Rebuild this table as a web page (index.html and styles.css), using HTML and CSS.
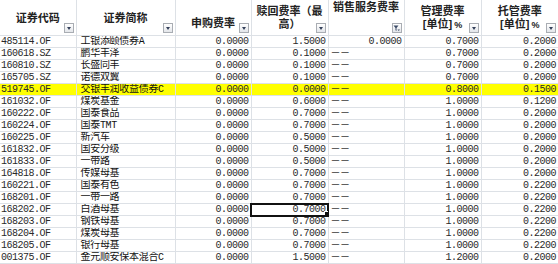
FILE: index.html
```html
<!DOCTYPE html>
<html lang="zh-CN">
<head>
    <meta charset="UTF-8">
    <title>基金费率</title>
    <link rel="stylesheet" href="styles.css">
</head>
<body>

    <table class="sheet">
        <colgroup>
            <col class="c-code">
            <col class="c-name">
            <col class="c-num">
            <col class="c-num2">
            <col class="c-num">
            <col class="c-num2">
            <col class="c-num2">
        </colgroup>
        <thead>
            <tr>
                <th>证券代码<span class="dd"></span></th>
                <th>证券简称<span class="dd"></span></th>
                <th class="low">申购费率<span class="dd"></span></th>
                <th>赎回费率（最<br>高）<span class="dd"></span></th>
                <th class="top">销售服务费率<span class="dd filter">
                    <svg width="7" height="7" viewBox="0 0 7 7"><path d="M0.5 0.5h5l-2 2.5v3l-1-0.8v-2.2z" fill="#3b4a66"/><path d="M4.5 4.5h2.5l-1.25 1.5z" fill="#3b4a66"/></svg>
                </span></th>
                <th>管理费率<br><span class="unit">[单位]</span><small>%</small><span class="dd"></span></th>
                <th>托管费率<br><span class="unit">[单位]</span><small>%</small><span class="dd"></span></th>
            </tr>
        </thead>
        <tbody id="rows"></tbody>
    </table>

    <script>
        // code, name, 申购, 赎回, 销售服务, 管理, 托管
        const data = [
            ['485114.OF', '工银添颐债券A', '0.0000', '1.5000', '0.0000', '0.7000', '0.2000'],
            ['160618.SZ', '鹏华丰泽', '0.0000', '0.1000', '－－', '0.7000', '0.2000'],
            ['160810.SZ', '长盛同丰', '0.0000', '0.1000', '－－', '0.7000', '0.2000'],
            ['165705.SZ', '诺德双翼', '0.0000', '0.1000', '－－', '0.7000', '0.2000'],
            ['519745.OF', '交银丰润收益债券C', '0.0000', '0.0000', '－－', '0.8000', '0.1500'],
            ['161032.OF', '煤炭基金', '0.0000', '0.6000', '－－', '1.0000', '0.1200'],
            ['160222.OF', '国泰食品', '0.0000', '0.7000', '－－', '1.0000', '0.2000'],
            ['160224.OF', '国泰TMT', '0.0000', '0.7000', '－－', '1.0000', '0.2000'],
            ['160225.OF', '新汽车', '0.0000', '0.5000', '－－', '1.0000', '0.2000'],
            ['161832.OF', '国安分级', '0.0000', '0.5000', '－－', '1.0000', '0.2000'],
            ['161833.OF', '一带路', '0.0000', '0.5000', '－－', '1.0000', '0.2000'],
            ['164818.OF', '传媒母基', '0.0000', '0.7000', '－－', '1.0000', '0.2000'],
            ['160221.OF', '国泰有色', '0.0000', '0.7000', '－－', '1.0000', '0.2200'],
            ['168201.OF', '一带一路', '0.0000', '0.7000', '－－', '1.0000', '0.2200'],
            ['168202.OF', '白酒母基', '0.0000', '0.7000', '－－', '1.0000', '0.2200'],
            ['168203.OF', '钢铁母基', '0.0000', '0.7000', '－－', '1.0000', '0.2200'],
            ['168204.OF', '煤炭母基', '0.0000', '0.7000', '－－', '1.0000', '0.2200'],
            ['168205.OF', '银行母基', '0.0000', '0.7000', '－－', '1.0000', '0.2200'],
            ['001375.OF', '金元顺安保本混合C', '0.0000', '1.5000', '－－', '1.2000', '0.2000'],
            ['', '', '', '', '', '', '']
        ];

        const body = document.getElementById('rows');
        data.forEach((row, i) => {
            const tr = body.insertRow();
            if (row[0] === '519745.OF') tr.className = 'hl';
            row.forEach((val, j) => {
                const td = tr.insertCell();
                td.textContent = val;
                if (j === 0) td.className = 'code';
                else if (j === 1) td.className = 'name';
                else if (val === '－－') td.className = 'dash';
                else td.className = 'num';
                // cellule active
                if (i === 14 && j === 3) td.classList.add('active');
            });
        });
    </script>

</body>
</html>
```

FILE: styles.css
```css
body {
    margin: 0;
    background-color: #fff;
    overflow: hidden;
}

.sheet {
    width: 558px;
    table-layout: fixed;
    border-collapse: collapse;
    font-family: "Liberation Mono", "Noto Sans CJK SC", monospace;
    font-size: 10px;
    letter-spacing: -0.5px;
    color: #2a2a2a;
}

.c-code { width: 76px; }
.c-name { width: 99px; }
.c-num { width: 76px; }
.c-num2 { width: 77px; }

.sheet th,
.sheet td {
    border: 1px solid #dde1e6;
    padding: 0;
    white-space: nowrap;
    overflow: hidden;
}

.sheet th:first-child,
.sheet td:first-child {
    border-left: none;
}

.sheet th:last-child,
.sheet td:last-child {
    border-right: none;
}

.sheet thead th {
    position: relative;
    height: 29px;
    border-top: none;
    font-family: "Liberation Sans", "Noto Sans CJK SC", sans-serif;
    font-weight: bold;
    font-size: 11px;
    letter-spacing: 0;
    line-height: 13px;
    color: #222;
    text-align: center;
    vertical-align: middle;
    padding-top: 1px;
}

.sheet thead th.top {
    vertical-align: top;
}

.sheet thead th.low {
    vertical-align: bottom;
    padding-bottom: 5px;
}

.sheet .unit {
    font-size: 11px;
}

.sheet th small {
    font-size: 9px;
    margin-left: 2px;
}

/* boutons de filtre */
.dd {
    position: absolute;
    right: 2px;
    bottom: 2px;
    width: 8px;
    height: 8px;
    border: 1px solid #a9adb3;
    background: linear-gradient(#ffffff, #e3e6ea);
    display: flex;
    align-items: center;
    justify-content: center;
}

.dd::after {
    content: "";
    border-left: 2.5px solid transparent;
    border-right: 2.5px solid transparent;
    border-top: 3px solid #34405a;
    margin-top: 1px;
}

.dd.filter::after {
    display: none;
}

.dd svg {
    display: block;
}

.sheet td {
    height: 11px;
    line-height: 11px;
}

.code {
    padding-left: 1px !important;
}

.name {
    padding-left: 4px !important;
    letter-spacing: -0.3px;
    color: #111;
}

.num {
    text-align: right;
    padding-right: 2px !important;
}

.dash {
    padding-left: 2px !important;
}

.hl td {
    background-color: #ffff00;
}

.active {
    position: relative;
    outline: 2px solid #111;
    outline-offset: -1px;
}

.active::after {
    content: "";
    position: absolute;
    right: -2px;
    bottom: -2px;
    width: 4px;
    height: 4px;
    background-color: #111;
    border: 1px solid #fff;
}
```
